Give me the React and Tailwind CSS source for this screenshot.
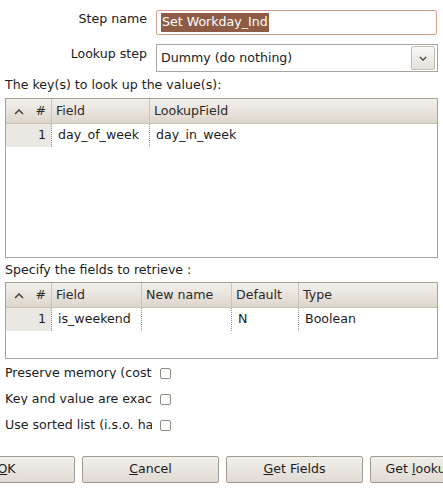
import React from "react";

const keyCols = [
  { name: "Field", w: "w-[98px]" },
  { name: "LookupField", w: "flex-1" },
];

const retrieveCols = [
  { name: "Field", w: "w-[90px]" },
  { name: "New name", w: "w-[90px]" },
  { name: "Default", w: "w-[67px]" },
  { name: "Type", w: "flex-1" },
];

function Chevron({ className }) {
  return (
    <svg viewBox="0 0 10 6" className={className} fill="none" stroke="currentColor" strokeWidth="1.6">
      <path d="M1 1l4 4 4-4" />
    </svg>
  );
}

function Grid({ cols, rows, height }) {
  return (
    <div className={`ml-[5px] w-[433px] ${height} border border-[#a9a298] bg-white`}>
      <div className="flex h-[25px] border-b border-[#c9c1b6] bg-gradient-to-b from-[#f1eeea] via-[#e9e4de] to-[#dcd5cc] text-[#2a2a2a]">
        <div className="flex w-[46px] items-center justify-between border-r border-[#cbc4ba] pl-[8px] pr-[5px]">
          <Chevron className="mt-[1px] h-[6px] w-[10px] rotate-180 text-[#444]" />
          <span>#</span>
        </div>
        {cols.map((c, i) => (
          <div
            key={c.name}
            className={`${c.w} flex items-center pl-[4px] ${i < cols.length - 1 ? "border-r border-[#cbc4ba]" : ""}`}
          >
            {c.name}
          </div>
        ))}
      </div>
      {rows.map((row, r) => (
        <div key={r} className="flex h-[23px]">
          <div className="flex w-[46px] items-center justify-end bg-[#ebe8e4] pr-[5px] border-r border-dotted border-[#9a948c]">
            {r + 1}
          </div>
          {cols.map((c, i) => (
            <div
              key={c.name}
              className={`${c.w} flex items-center pl-[6px] ${i < cols.length - 1 ? "border-r border-dotted border-[#9a948c]" : ""}`}
            >
              {row[i]}
            </div>
          ))}
        </div>
      ))}
    </div>
  );
}

function Check({ label }) {
  return (
    <div className="flex h-[26px] items-center">
      <div className="w-[152px] overflow-hidden whitespace-nowrap pl-[5px]">{label}</div>
      <div className="ml-[8px] h-[11px] w-[11px] rounded-[2px] border border-[#8f8a84] bg-white" />
    </div>
  );
}

function Button({ children }) {
  return (
    <div className="flex h-[27px] w-[137px] shrink-0 items-center justify-center rounded-[2px] border border-[#a39c93] bg-gradient-to-b from-[#f2efeb] to-[#e0dad3] text-[#1c1c1c]">
      {children}
    </div>
  );
}

export default function App() {
  return (
    <div className="relative h-[488px] w-[443px] overflow-hidden bg-white font-['DejaVu_Sans',sans-serif] text-[12.6px] leading-none text-[#1c1c1c]">
      <div className="mt-[10px] flex h-[25px]">
        <div className="w-[147px] pt-[3px] text-right">Step name</div>
        <div className="ml-[9px] flex h-[25px] w-[281px] items-center rounded-[2px] border border-[#d7a08c] pl-[4px]">
          <span className="bg-[#8e5b45] px-[1px] py-[3px] text-white">Set Workday_Ind</span>
        </div>
      </div>

      <div className="mt-[9px] flex h-[28px]">
        <div className="w-[147px] pt-[4px] text-right">Lookup step</div>
        <div className="ml-[9px] flex h-[28px] w-[282px] items-center justify-between border border-[#aaa49c] pl-[4px] pr-[2px]">
          <span>Dummy (do nothing)</span>
          <div className="flex h-[24px] w-[24px] items-center justify-center rounded-[2px] border border-[#c2bcb4] bg-gradient-to-b from-[#faf9f7] to-[#e6e1db]">
            <Chevron className="h-[5px] w-[8px] text-[#333]" />
          </div>
        </div>
      </div>

      <div className="ml-[5px] mt-[2px] flex h-[22px] items-center">The key(s) to look up the value(s):</div>
      <Grid cols={keyCols} rows={[["day_of_week", "day_in_week"]]} height="mt-[2px] h-[160px]" />

      <div className="ml-[5px] mt-[2px] flex h-[20px] items-center">Specify the fields to retrieve :</div>
      <Grid cols={retrieveCols} rows={[["is_weekend", "", "N", "Boolean"]]} height="mt-[2px] h-[77px]" />

      <div className="mt-[1px]">
        <Check label="Preserve memory (cost is speed)" />
        <Check label="Key and value are exactly one integer field" />
        <Check label="Use sorted list (i.s.o. hashtable)" />
      </div>

      <div className="ml-[-62px] mt-[18px] flex gap-[7px]">
        <Button>
          <span><u>O</u>K</span>
        </Button>
        <Button>
          <span><u>C</u>ancel</span>
        </Button>
        <Button>
          <span><u>G</u>et Fields</span>
        </Button>
        <Button>
          <span className="whitespace-nowrap">Get <u>l</u>ookup fields</span>
        </Button>
      </div>
    </div>
  );
}
